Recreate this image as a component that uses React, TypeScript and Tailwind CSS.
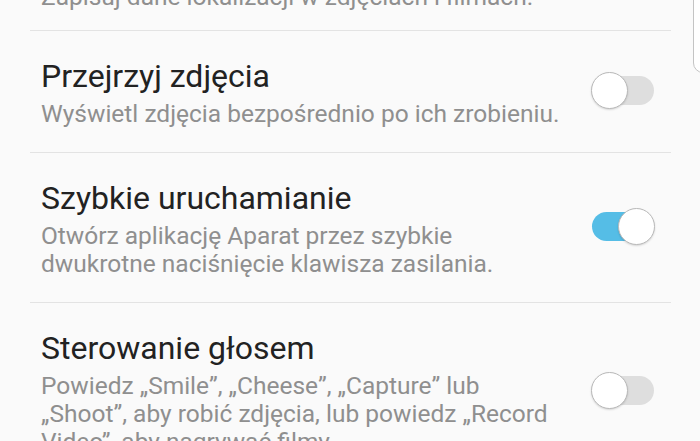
import React from 'react';

type Row = {
  title: string;
  lines: string[];
  on: boolean;
};

const rows: Row[] = [
  {
    title: 'Przejrzyj zdjęcia',
    lines: ['Wyświetl zdjęcia bezpośrednio po ich zrobieniu.'],
    on: false,
  },
  {
    title: 'Szybkie uruchamianie',
    lines: ['Otwórz aplikację Aparat przez szybkie', 'dwukrotne naciśnięcie klawisza zasilania.'],
    on: true,
  },
  {
    title: 'Sterowanie głosem',
    lines: [
      'Powiedz „Smile”, „Cheese”, „Capture” lub',
      '„Shoot”, aby robić zdjęcia, lub powiedz „Record',
      'Video”, aby nagrywać filmy.',
    ],
    on: false,
  },
];

// track with thumb overhanging it a little, laid out by flex
const Toggle = ({ on }: { on: boolean }) => (
  <div
    className={
      on
        ? 'flex items-center w-[62px] h-[29px] mb-[6px] rounded-full bg-[#55bde6] shrink-0'
        : 'flex items-center w-[62px] h-[29px] mb-[6px] rounded-full bg-[#dedede] shrink-0'
    }
  >
    <div
      className={
        on
          ? 'ml-auto -mr-[1px] w-[37px] h-[37px] rounded-full bg-white border-[1.5px] border-[#b9b9b9] shadow-[0_1px_2px_rgba(0,0,0,0.15)]'
          : '-ml-[1px] w-[37px] h-[37px] rounded-full bg-white border-[1.5px] border-[#b9b9b9] shadow-[0_1px_2px_rgba(0,0,0,0.15)]'
      }
    />
  </div>
);

const App = () => {
  return (
    <div className="relative w-[700px] h-[441px] overflow-hidden bg-[#fafafa] font-['Roboto',sans-serif]">
      <div className="px-[30px] pr-[29px]">
        <div className="-mt-[17px] pb-[19px] px-[11px] border-b border-[#e3e3e3] text-[24.5px] leading-[28px] text-[#8f8f8f] whitespace-nowrap">
          Zapisuj dane lokalizacji w zdjęciach i filmach.
        </div>
        {rows.map((row) => (
          <div
            key={row.title}
            className="flex items-center justify-between pl-[11px] pr-[17px] pt-[27px] pb-[24px] border-b border-[#e3e3e3]"
          >
            <div>
              <div className="text-[32px] leading-[36px] text-[#222222] whitespace-nowrap">{row.title}</div>
              <div className="mt-[6px] text-[24.5px] leading-[28px] text-[#8f8f8f]">
                {row.lines.map((l) => (
                  <div key={l} className="whitespace-nowrap">{l}</div>
                ))}
              </div>
            </div>
            <Toggle on={row.on} />
          </div>
        ))}
      </div>
      {/* edge of the scroll handle peeking in at the right */}
      <div className="absolute right-[-6px] top-[-4px] w-[13px] h-[77px] rounded-bl-[10px] border border-[#c4c4c4] bg-white" />
    </div>
  );
};

export default App;
